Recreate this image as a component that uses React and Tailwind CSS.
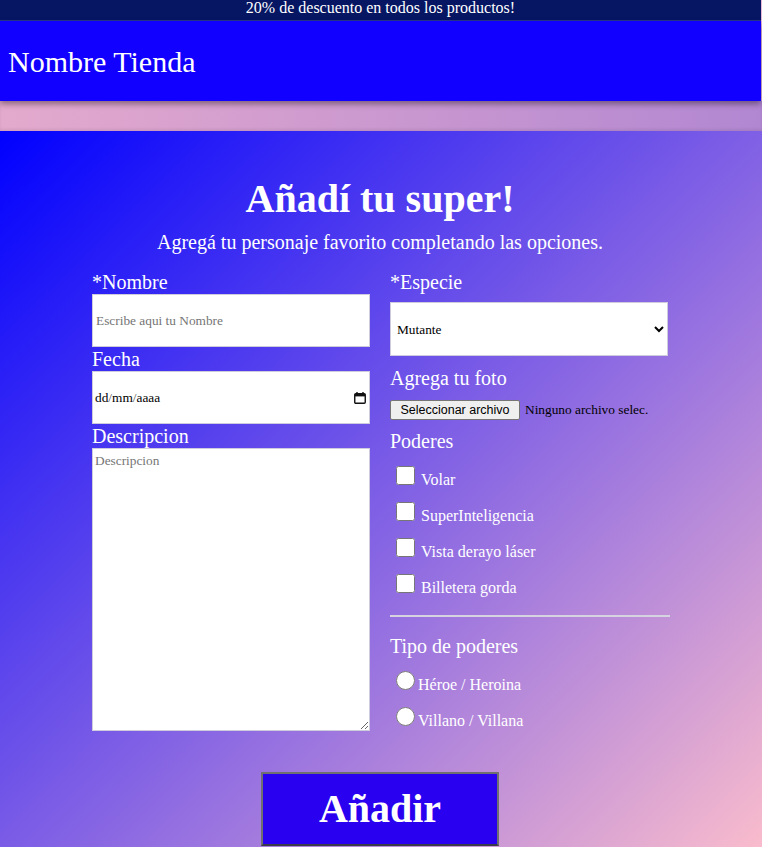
import React from 'react';

const poderes = ['Volar', 'SuperInteligencia', 'Vista derayo láser', 'Billetera gorda'];
const tipos = ['Héroe / Heroina', 'Villano / Villana'];

function CalendarIcon() {
  return (
    <svg width="12" height="12" viewBox="0 0 12 12" className="shrink-0">
      <path d="M3 0v2M9 0v2" stroke="#111" strokeWidth="1.4" />
      <rect x="0.75" y="1.75" width="10.5" height="9.5" rx="1" fill="none" stroke="#111" strokeWidth="1.4" />
      <rect x="1" y="2" width="10" height="2.4" fill="#111" />
    </svg>
  );
}

export default function App() {
  return (
    <div className="min-h-screen bg-[#e6b6d6] font-['Liberation_Serif','Times_New_Roman',serif]">
      <div className="mr-px h-[21px] bg-[#061663] border-b border-[#26368f] text-center text-white text-[16px] leading-[16px]">
        20% de descuento en todos los productos!
      </div>

      <header className="relative z-10 mr-px h-[80px] bg-[#1100ff] flex items-center px-2 text-white text-[30px] shadow-[0_3px_6px_rgba(0,0,0,0.4)]">
        Nombre Tienda
      </header>

      <div className="h-[30px] bg-[linear-gradient(to_right,#e4aacd,#b287d2)] shadow-[inset_0_-2px_3px_rgba(0,0,0,0.08)]" />

      <main className="bg-[linear-gradient(to_bottom_right,#0000ff,#ffc0cb)] pt-[46px] pb-[35px] pr-[2px] text-white">
        <h1 className="text-center font-bold text-[40px] leading-[44px]">Añadí tu super!</h1>
        <p className="mt-[10px] text-center text-[20px] leading-[22px]">
          Agregá tu personaje favorito completando las opciones.
        </p>

        <form className="mx-auto mt-[17px] grid w-[576px] grid-cols-2 gap-x-5" onSubmit={(e) => e.preventDefault()}>
          {/* columna izquierda */}
          <div className="flex flex-col">
            <label className="text-[20px] leading-[24px]">*Nombre</label>
            <input
              type="text"
              placeholder="Escribe aqui tu Nombre"
              className="h-[53px] w-full bg-white border border-[#cdcbdc] pl-[3px] text-[13.33px] text-black placeholder:text-[#757575] outline-none"
            />
            <label className="text-[20px] leading-[24px]">Fecha</label>
            <div className="h-[53px] w-full bg-white border border-[#cdcbdc] pl-[2px] pr-[3px] flex items-center justify-between text-[13.33px] text-black">
              <span>
                dd<span className="text-[#555]">/</span>mm<span className="text-[#555]">/</span>aaaa
              </span>
              <CalendarIcon />
            </div>
            <label className="text-[20px] leading-[24px]">Descripcion</label>
            <textarea
              placeholder="Descripcion"
              className="h-[283px] w-full bg-white border border-[#cdcbdc] p-[2px] text-[13.33px] text-black placeholder:text-[#757575] outline-none"
            />
          </div>

          {/* columna derecha */}
          <div className="flex flex-col">
            <label className="text-[20px] leading-[24px]">*Especie</label>
            <select
              defaultValue="Mutante"
              className="mt-[8px] h-[54px] w-full bg-white border border-[#cdcbdc] pl-[2px] text-[13.33px] text-black outline-none"
            >
              <option>Mutante</option>
              <option>Humano</option>
              <option>Alien</option>
            </select>

            <label className="mt-[10px] text-[20px] leading-[24px]">Agrega tu foto</label>
            <div className="mt-[10px] flex items-center h-[20px]">
              <button
                type="button"
                className="h-[20px] w-[130px] bg-[#efefef] border border-[#767676] rounded-[2px] text-black text-[12.5px] font-['Liberation_Sans',Arial,sans-serif] leading-[18px]"
              >
                Seleccionar archivo
              </button>
              <span className="ml-[5px] text-[13.33px] text-black">Ninguno archivo selec.</span>
            </div>

            <label className="mt-[9px] text-[20px] leading-[24px]">Poderes</label>
            <div className="flex flex-col">
              {poderes.map((p) => (
                <label key={p} className="flex items-start h-[36px]">
                  <input type="checkbox" className="mt-[13px] ml-[6px] w-[19px] h-[19px] shrink-0" />
                  <span className="ml-[6px] mt-[19px] text-[16px] leading-[16px]">{p}</span>
                </label>
              ))}
            </div>

            <div className="mt-[18px] h-[2px] w-[280px] bg-[#d6d3e0]" />

            <label className="mt-[17px] text-[20px] leading-[24px]">Tipo de poderes</label>
            <div className="flex flex-col">
              {tipos.map((t) => (
                <label key={t} className="flex items-start h-[36px]">
                  <input type="radio" name="tipo" className="mt-[13px] ml-[6px] w-[19px] h-[19px] shrink-0" />
                  <span className="ml-[3px] mt-[19px] text-[16px] leading-[16px]">{t}</span>
                </label>
              ))}
            </div>
          </div>
        </form>

        <div className="mt-[41px] flex justify-center">
          <button
            type="submit"
            className="h-[74px] w-[238px] bg-[#2a00f0] border-2 border-[#6f6f6f] border-b-[#3a3a4a] text-white font-bold text-[40px] leading-[44px]"
          >
            Añadir
          </button>
        </div>
      </main>
    </div>
  );
}
